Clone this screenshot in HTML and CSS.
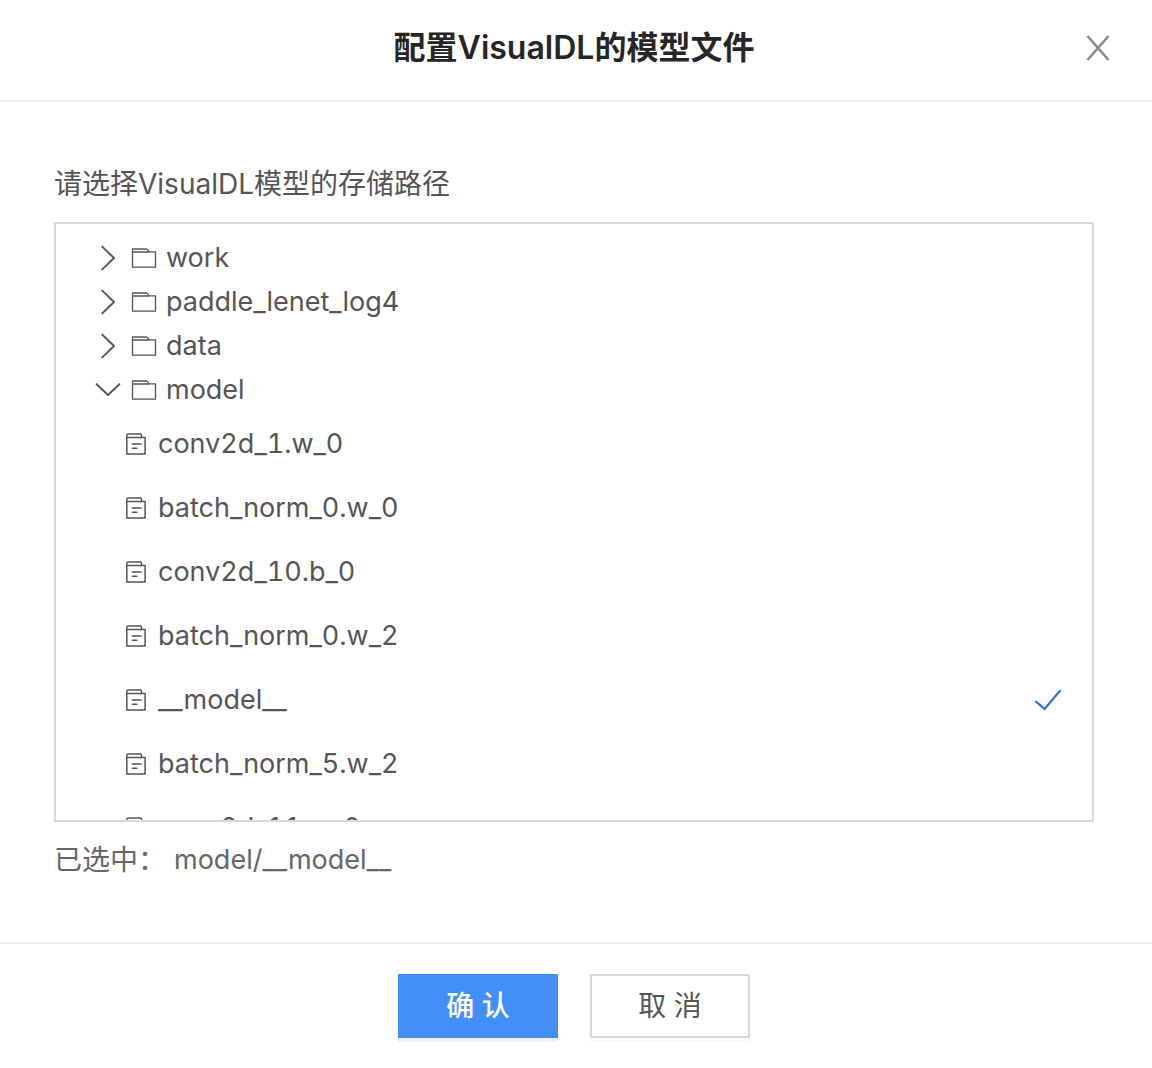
FILE: index.html
```html
<!DOCTYPE html>
<html lang="zh-CN">
<head>
  <meta charset="UTF-8">
  <meta name="viewport" content="width=device-width, initial-scale=1.0">
  <title>配置VisualDL的模型文件</title>
  <link rel="stylesheet" href="styles.css">
</head>
<body>
  <!-- shared icons -->
  <svg class="icon-defs" aria-hidden="true">
    <symbol id="icon-right" viewBox="0 0 28 28">
      <path d="M8.2 2.6 L20 14 L8.2 25.4" fill="none" stroke="currentColor" stroke-width="1.9" stroke-linecap="round" stroke-linejoin="round"/>
    </symbol>
    <symbol id="icon-down" viewBox="0 0 28 28">
      <path d="M2.6 8.2 L14 19 L25.4 8.2" fill="none" stroke="currentColor" stroke-width="1.9" stroke-linecap="round" stroke-linejoin="round"/>
    </symbol>
    <symbol id="icon-folder" viewBox="0 0 28 28">
      <path d="M2.5 8.2 V5 H16.2 Q17 5 17.6 5.6 L19.2 7.9 H25.5 V23.2 H2.5 Z M2.5 8 H19.2" fill="none" stroke="currentColor" stroke-width="1.3" stroke-linejoin="round"/>
    </symbol>
    <symbol id="icon-file" viewBox="0 0 28 28">
      <path d="M4.8 7.6 V5.5 Q4.8 4.1 6.1 4.1 H18.7 Q19.5 4.1 19.5 5 V7.6 M4.8 7.6 H23.1 V24 H4.8 Z M10.3 14 H19.3 M10.3 18.2 H14.8" fill="none" stroke="currentColor" stroke-width="1.5" stroke-linecap="round" stroke-linejoin="round"/>
    </symbol>
    <symbol id="icon-check" viewBox="0 0 28 28">
      <path d="M2 15.6 L10.6 23 L26 4.8" fill="none" stroke="currentColor" stroke-width="2.2" stroke-linecap="round" stroke-linejoin="miter"/>
    </symbol>
    <symbol id="icon-close" viewBox="0 0 28 28">
      <path d="M3.5 2 L24.5 26 M24.5 2 L3.5 26" fill="none" stroke="currentColor" stroke-width="2.6"/>
    </symbol>
  </svg>

  <div class="modal" role="dialog" aria-labelledby="modal-title">
    <div class="modal-header">
      <h1 class="modal-title" id="modal-title">配置VisualDL的模型文件</h1>
      <button class="close-button" type="button" aria-label="关闭"><svg class="icon"><use href="#icon-close"/></svg></button>
    </div>

    <div class="modal-body">
      <p class="tip" id="tip">请选择VisualDL模型的存储路径</p>
      <div class="tree" role="group" aria-labelledby="tip">
        <button class="folder" type="button"><svg class="icon"><use href="#icon-right"/></svg><svg class="icon"><use href="#icon-folder"/></svg><span>work</span></button>
        <button class="folder" type="button"><svg class="icon"><use href="#icon-right"/></svg><svg class="icon"><use href="#icon-folder"/></svg><span>paddle_lenet_log4</span></button>
        <button class="folder" type="button"><svg class="icon"><use href="#icon-right"/></svg><svg class="icon"><use href="#icon-folder"/></svg><span>data</span></button>
        <button class="folder" type="button" aria-expanded="true"><svg class="icon"><use href="#icon-down"/></svg><svg class="icon"><use href="#icon-folder"/></svg><span>model</span></button>
        <button class="file" type="button"><svg class="icon"><use href="#icon-file"/></svg><span>conv2d_1.w_0</span></button>
        <button class="file" type="button"><svg class="icon"><use href="#icon-file"/></svg><span>batch_norm_0.w_0</span></button>
        <button class="file" type="button"><svg class="icon"><use href="#icon-file"/></svg><span>conv2d_10.b_0</span></button>
        <button class="file" type="button"><svg class="icon"><use href="#icon-file"/></svg><span>batch_norm_0.w_2</span></button>
        <button class="file" type="button" aria-pressed="true"><svg class="icon"><use href="#icon-file"/></svg><span>__model__</span><svg class="icon check"><use href="#icon-check"/></svg></button>
        <button class="file" type="button"><svg class="icon"><use href="#icon-file"/></svg><span>batch_norm_5.w_2</span></button>
        <button class="file" type="button"><svg class="icon"><use href="#icon-file"/></svg><span>conv2d_11.w_0</span></button>
      </div>
      <p class="selected"><span class="selected-label">已选中：</span><span>model/__model__</span></p>
    </div>

    <div class="modal-footer">
      <button class="button primary" type="button">确 认</button>
      <button class="button" type="button">取 消</button>
    </div>
  </div>
</body>
</html>
```
FILE: styles.css
```css
* {
  box-sizing: border-box;
}
body {
  margin: 0;
  background-color: #fff;
  color: #555;
  font-family: Inter, "Noto Sans CJK SC", sans-serif;
  font-size: 27px;
  line-height: 44px;
  font-variant-numeric: tabular-nums;
}
button {
  font: inherit;
  font-variant-numeric: inherit;
  color: inherit;
  cursor: pointer;
}
p {
  margin: 0;
}
.icon-defs {
  display: none;
}
.icon {
  width: 28px;
  height: 28px;
  flex: none;
}
.modal-header {
  display: grid;
  grid-template-columns: 100px 1fr 100px;
  align-items: center;
  padding: 26px 4px 30px 0;
  border-bottom: 2px solid #efefef;
}
.modal-title {
  grid-column: 2;
  margin: 0;
  text-align: center;
  font-size: 32px;
  line-height: 44px;
  font-weight: 600;
  color: #262626;
}
.close-button {
  display: flex;
  justify-self: center;
  padding: 0;
  border: none;
  background: none;
  color: #8c8c8c;
}
.modal-body {
  padding: 60px 58px 60px 54px;
}
.tip,
.selected-label {
  font-size: 28px;
}
.tree {
  height: 600px;
  margin: 16px 0;
  padding: 12px 30px 12px 38px;
  border: 2px solid #d9d9d9;
  overflow-y: auto;
  scrollbar-width: none;
}
.folder,
.file {
  display: flex;
  align-items: center;
  gap: 8px;
  width: 100%;
  padding: 0;
  border: none;
  background: none;
  text-align: left;
}
.folder {
  height: 44px;
}
.file {
  height: 64px;
  padding-left: 28px;
}
.check {
  margin-left: auto;
  color: #2b71e8;
}
.selected {
  display: flex;
  gap: 8px;
  color: #666;
}
.modal-footer {
  display: flex;
  justify-content: center;
  gap: 32px;
  padding: 30px 4px 30px 0;
  border-top: 2px solid #efefef;
}
.button {
  width: 160px;
  height: 64px;
  padding: 0;
  border: 2px solid #d9d9d9;
  background-color: #fff;
  font-size: 28px;
  box-shadow: 0 4px 0 rgba(0, 0, 0, 0.02);
}
.primary {
  border-color: #428ff8;
  background-color: #428ff8;
  color: #fff;
  font-weight: 500;
  box-shadow: 0 4px 0 rgba(0, 0, 0, 0.05);
}
```
